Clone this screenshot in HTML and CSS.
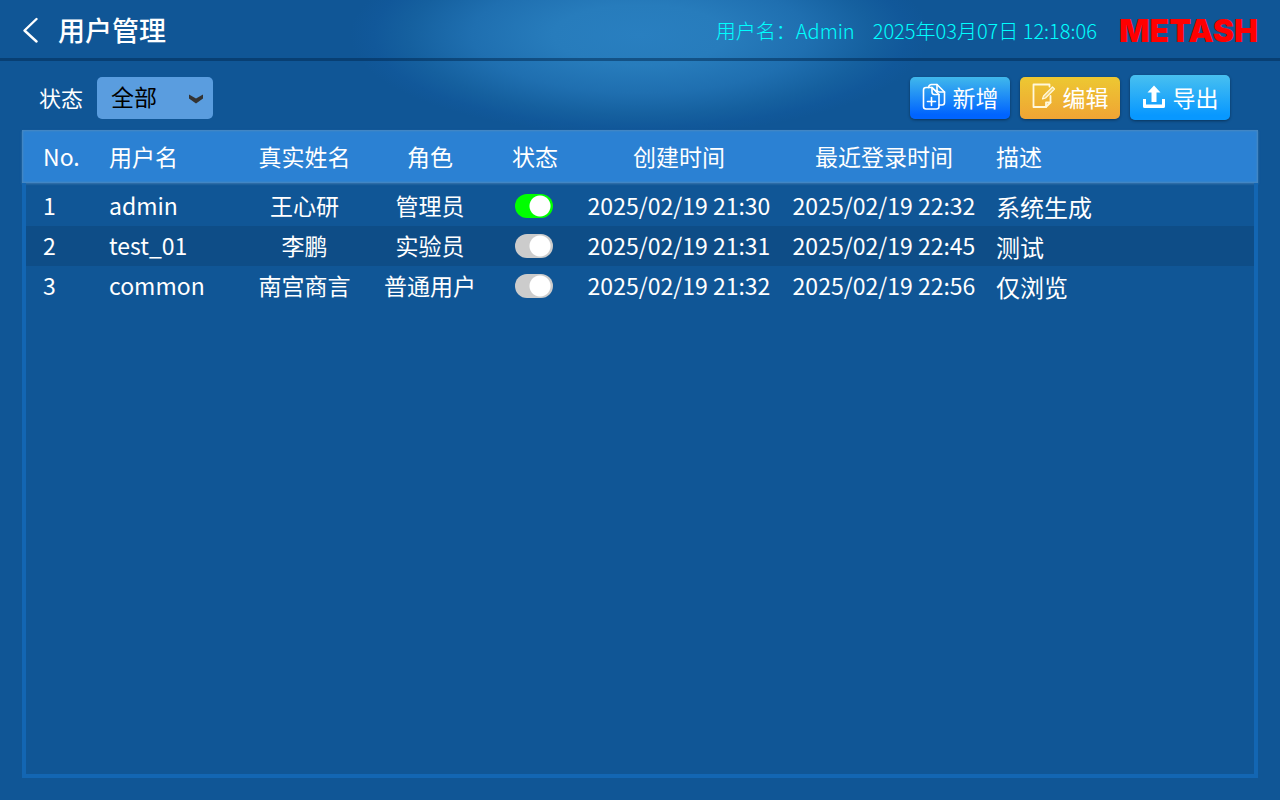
FILE: index.html
```html
<!DOCTYPE html>
<html lang="zh-CN">
<head>
    <meta charset="UTF-8">
    <meta name="viewport" content="width=device-width, initial-scale=1.0">
    <title>用户管理</title>
    <link rel="stylesheet" href="styles.css">
</head>
<body>
    <header class="header">
        <button type="button" class="back-btn" aria-label="返回">
            <svg width="16" height="26" viewBox="0 0 16 26" fill="none" stroke="#fff" stroke-width="2.4" stroke-linecap="round" stroke-linejoin="round">
                <path d="M14.500 2 2.500 13.500 14.500 24.500"/>
            </svg>
        </button>
        <h1 class="title">用户管理</h1>
        <span class="user">用户名：Admin</span>
        <time class="clock" datetime="2025-03-07T12:18:06">2025年03月07日 12:18:06</time>
        <span class="logo">METASH</span>
    </header>

    <main class="main">
        <div class="toolbar">
            <label class="filter-label" for="status">状态</label>
            <div class="select-box">
                <select id="status" name="status">
                    <option>全部</option>
                    <option>启用</option>
                    <option>禁用</option>
                </select>
                <svg class="arrow" width="16" height="10" viewBox="0 0 16 10" fill="#333">
                    <path d="M1 0.500 8 4.500 15 0.500V4.500L8 9.500 1 4.500Z"/>
                </svg>
            </div>

            <div class="actions">
                <button type="button" class="btn btn-add">
                    <svg width="24" height="28" viewBox="0 0 24 28" fill="none" stroke="#fff" stroke-width="1.6" stroke-linejoin="round" stroke-linecap="round">
                        <path d="M4 4.500H10L17 11.500V23.500Q17 26 14.500 26H4Q1.500 26 1.500 23.500V7Q1.500 4.500 4 4.500Z"/>
                        <path d="M10 4.500V9Q10 11.500 12.500 11.500H17"/>
                        <path d="M6.500 4.500Q7 1.500 9.500 1.500H15L22.500 9V19.500Q22.500 22 20 22H17"/>
                        <path d="M15 1.500V6.500Q15 9 17.500 9H22.500M10 4.500 15 9"/>
                        <path d="M9.500 14.500V22.500M5.500 18.500H13.500"/>
                    </svg>
                    <span>新增</span>
                </button>
                <button type="button" class="btn btn-edit">
                    <svg width="24" height="28" viewBox="0 0 24 28" fill="none" stroke="#fff8dc" stroke-width="1.8" stroke-linejoin="round" stroke-linecap="round">
                        <path d="M17.500 3.500V1.500H1.500V24H14L18.500 19.500V13"/>
                        <path d="M14 24V19.500H18.500"/>
                        <path d="M11.500 13 20.500 4 22.500 6 13.500 15 10.500 16Z" stroke-width="1.2" fill="#fff8dc" fill-opacity="0.4"/>
                    </svg>
                    <span>编辑</span>
                </button>
                <button type="button" class="btn btn-export">
                    <svg width="24" height="28" viewBox="0 0 24 28" fill="#fff">
                        <path d="M12 2.500 18.500 9.500H14.500V19H9.500V9.500H5.500Z"/>
                        <path d="M1 16H4V21.500H20V16H23V23.500Q23 25 21.500 25H2.500Q1 25 1 23.500Z"/>
                    </svg>
                    <span>导出</span>
                </button>
            </div>
        </div>

        <div class="panel">
            <table class="user-table">
                <colgroup>
                    <col class="col-no">
                    <col class="col-user">
                    <col class="col-name">
                    <col class="col-role">
                    <col class="col-status">
                    <col class="col-created">
                    <col class="col-login">
                    <col>
                </colgroup>
                <thead>
                    <tr>
                        <th class="left">No.</th>
                        <th class="left">用户名</th>
                        <th>真实姓名</th>
                        <th>角色</th>
                        <th>状态</th>
                        <th>创建时间</th>
                        <th>最近登录时间</th>
                        <th class="desc">描述</th>
                    </tr>
                </thead>
                <tbody>
                    <tr>
                        <td class="left">1</td>
                        <td class="left">admin</td>
                        <td>王心研</td>
                        <td>管理员</td>
                        <td class="state"><input type="checkbox" class="switch" aria-label="admin 状态" checked></td>
                        <td>2025/02/19 21:30</td>
                        <td>2025/02/19 22:32</td>
                        <td class="desc">系统生成</td>
                    </tr>
                    <tr>
                        <td class="left">2</td>
                        <td class="left">test_01</td>
                        <td>李鹏</td>
                        <td>实验员</td>
                        <td class="state"><input type="checkbox" class="switch" aria-label="test_01 状态"></td>
                        <td>2025/02/19 21:31</td>
                        <td>2025/02/19 22:45</td>
                        <td class="desc">测试</td>
                    </tr>
                    <tr>
                        <td class="left">3</td>
                        <td class="left">common</td>
                        <td>南宫商言</td>
                        <td>普通用户</td>
                        <td class="state"><input type="checkbox" class="switch" aria-label="common 状态"></td>
                        <td>2025/02/19 21:32</td>
                        <td>2025/02/19 22:56</td>
                        <td class="desc">仅浏览</td>
                    </tr>
                </tbody>
            </table>
        </div>
    </main>
</body>
</html>
```

FILE: styles.css
```css
* {
    box-sizing: border-box;
}

body {
    margin: 0;
    min-height: 100vh;
    display: flex;
    flex-direction: column;
    font-family: "Noto Sans CJK SC", sans-serif;
    font-size: 23px;
    color: #fff;
    background: radial-gradient(ellipse 290px 100px at 50% 35px, #297fc0 0%, #277cbc 30%, #1f6fb0 58%, #15609f 80%, #11589a 92%, #105696 100%) no-repeat #105696;
}

button, select {
    font-family: inherit;
    font-size: inherit;
    cursor: pointer;
}

/* header */
.header {
    display: flex;
    align-items: center;
    height: 61px;
    padding: 0 22px;
    border-bottom: 3px solid rgba(0, 40, 80, 0.5);
}

.back-btn {
    display: flex;
    padding: 2px 0 0;
    margin-right: 20px;
    border: none;
    background: none;
}

.title {
    margin: 0 auto 0 0;
    padding-top: 2px;
    font-size: 27px;
    font-weight: 500;
    line-height: 40px;
}

.user, .clock {
    font-size: 20px;
    font-weight: 300;
    line-height: 30px;
    padding-top: 4px;
    margin-right: 18px;
    color: #00ffff;
}

.logo {
    margin-left: 4px;
    padding-top: 4px;
    font-family: Inter, "Liberation Sans", Arial, sans-serif;
    font-size: 32px;
    font-weight: 900;
    line-height: 36px;
    color: #ff0000;
}

.main {
    flex: 1;
    display: flex;
    flex-direction: column;
    padding: 0 22px 22px;
}

/* toolbar */
.toolbar {
    display: flex;
    align-items: center;
    height: 69px;
    padding: 4px 28px 0 17px;
}

.filter-label {
    margin-right: 14px;
    padding-bottom: 2px;
    font-size: 22px;
}

.select-box {
    position: relative;
}

.select-box select {
    appearance: none;
    display: block;
    width: 116px;
    height: 42px;
    padding: 0 14px 4px;
    border: none;
    border-radius: 5px;
    background: #5a9ddf;
    color: #000;
}

.arrow {
    position: absolute;
    right: 9px;
    top: 17px;
    pointer-events: none;
}

.actions {
    display: flex;
    align-items: center;
    gap: 10px;
    margin-left: auto;
}

.btn {
    display: flex;
    align-items: center;
    justify-content: center;
    gap: 7px;
    width: 100px;
    height: 42px;
    padding: 0 0 2px;
    border: none;
    border-radius: 5px;
    color: #fff;
    white-space: nowrap;
    box-shadow: 0 1px 3px rgba(0, 0, 0, 0.4);
}

.btn-add {
    background: linear-gradient(#40b8ec, #0064ff 90%);
}

.btn-edit {
    background: linear-gradient(#edc832, #efa434);
}

.btn-export {
    height: 45px;
    background: linear-gradient(#48c0f0, #0898ff 90%);
}

/* table */
.panel {
    flex: 1;
    box-shadow: inset 0 0 0 4px #1366b3;
}

.user-table {
    width: 100%;
    table-layout: fixed;
    border-collapse: separate;
    border-spacing: 0;
    line-height: 34px;
    white-space: nowrap;
}

.col-no { width: 77px; }
.col-user { width: 140px; }
.col-name { width: 131px; }
.col-role { width: 120px; }
.col-status { width: 90px; }
.col-created { width: 198px; }
.col-login { width: 212px; }

.user-table thead {
    background: #2b81d3;
    box-shadow: inset 0 0 2px 1px #4a88bf, 0 1px 2px #3a76ad;
}

.user-table th {
    height: 53px;
    padding: 0 0 2px;
    font-weight: 400;
}

.user-table th:first-child {
    padding-left: 21px;
}

.user-table td {
    height: 40px;
    padding: 0 0 2px;
    text-align: center;
}

.user-table tbody tr:first-child td {
    height: 43px;
    padding-top: 3px;
}

.user-table tbody tr:nth-child(even) td {
    background: #0e4d87;
}

.user-table td:first-child {
    padding-left: 17px;
    border-left: 4px solid #1366b3;
}

.user-table td:last-child {
    border-right: 4px solid #1366b3;
}

.user-table .left {
    text-align: left;
}

.user-table .left + .left {
    padding-left: 10px;
}

.user-table .desc {
    text-align: left;
    padding-left: 6px;
}

.user-table td.desc {
    font-size: 24px;
    padding-top: 2px;
    padding-bottom: 0;
}

.user-table tbody tr:first-child td.desc {
    padding-top: 5px;
}

.user-table td.state {
    padding-bottom: 0;
    padding-right: 2px;
}

.switch {
    appearance: none;
    display: block;
    width: 38px;
    height: 24px;
    margin: 0 auto;
    border-radius: 12px;
    background: radial-gradient(circle at 25px 12px, #fff 10px, transparent 11px) #ccc;
    cursor: pointer;
}

.switch:checked {
    background-color: #00ff00;
}
```
